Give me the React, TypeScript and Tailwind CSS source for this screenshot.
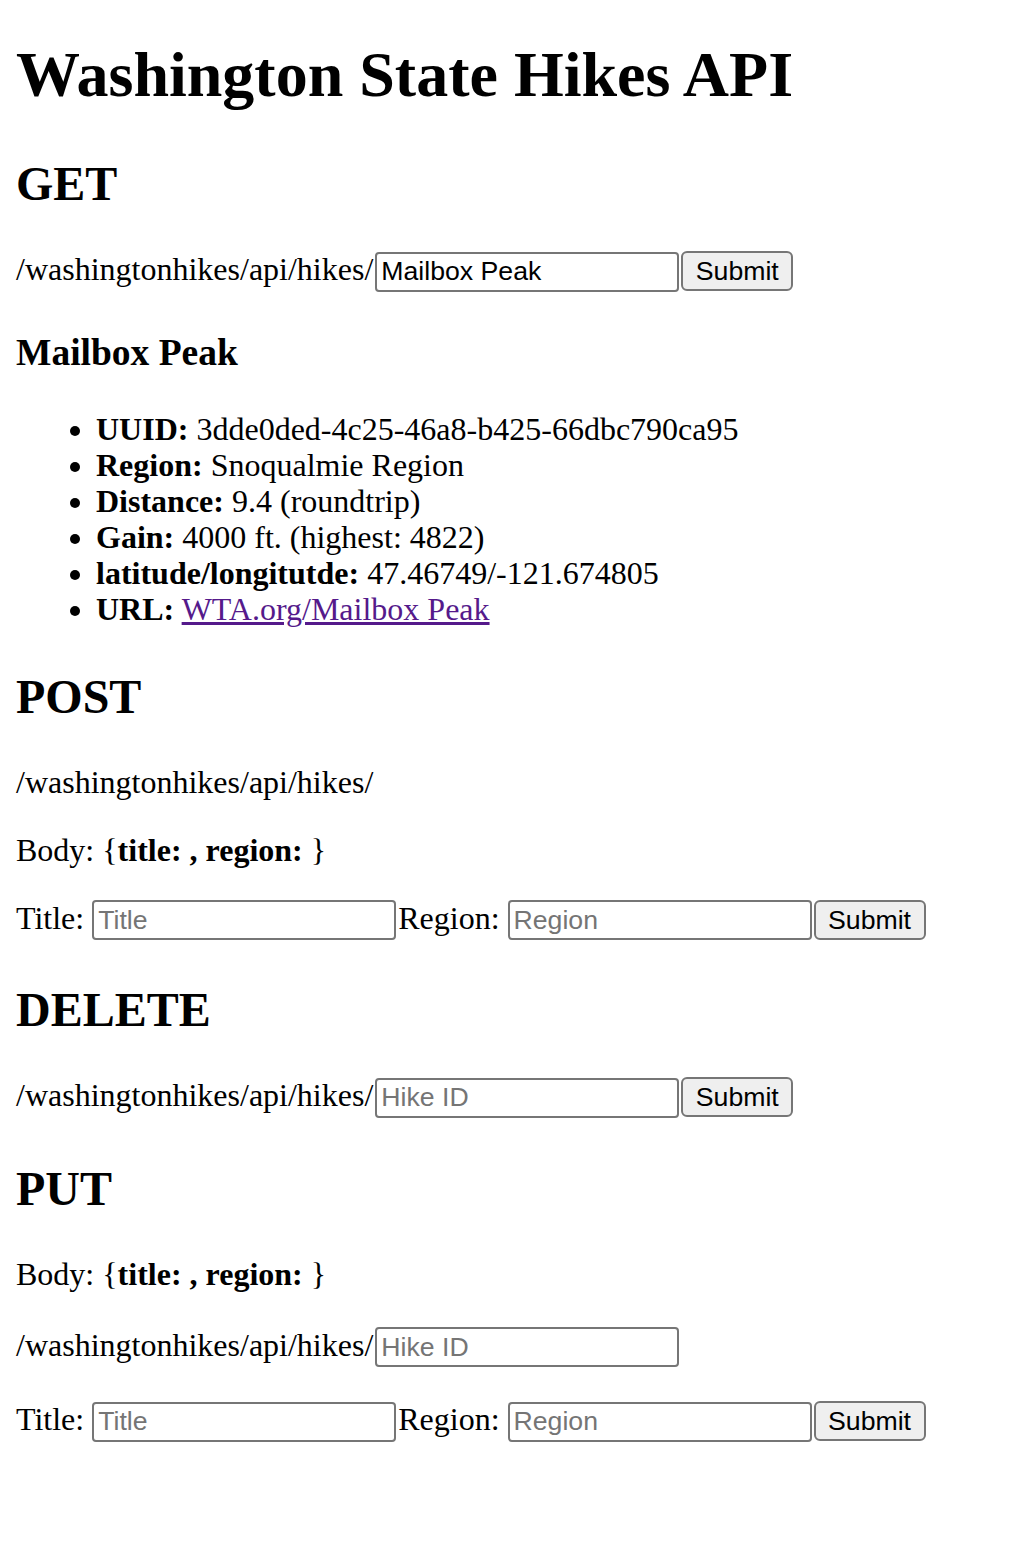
const serif = "font-['Liberation_Serif','Times_New_Roman',serif]";

function TextInput({ placeholder, value }: { placeholder?: string; value?: string }) {
  return (
    <input
      type="text"
      placeholder={placeholder}
      defaultValue={value}
      className="inline-block align-baseline w-[304px] h-[40px] px-[4px] bg-white border-2 border-[#767676] rounded-[4px] font-['Liberation_Sans',Arial,sans-serif] text-[26.67px] text-black placeholder:text-[#757575]"
    />
  );
}

function SubmitButton() {
  return (
    <button className="inline-block align-baseline ml-[2px] w-[112px] h-[40px] bg-[#efefef] border-2 border-[#767676] rounded-[6px] font-['Liberation_Sans',Arial,sans-serif] text-[26.67px] text-black">
      Submit
    </button>
  );
}

function PathRow({ mt, value, placeholder, button = true }: { mt: string; value?: string; placeholder?: string; button?: boolean }) {
  return (
    <p className={`${mt} leading-[36px] whitespace-nowrap`}>
      <span>/washingtonhikes/api/hikes/</span>
      <span className="ml-[2px]" />
      <TextInput value={value} placeholder={placeholder} />
      {button && <SubmitButton />}
    </p>
  );
}

function TitleRegionRow({ mt }: { mt: string }) {
  return (
    <p className={`${mt} leading-[36px] whitespace-nowrap`}>
      Title: <TextInput placeholder="Title" />
      <span className="ml-[2px]">Region: </span>
      <TextInput placeholder="Region" />
      <SubmitButton />
    </p>
  );
}

function BodyLine({ mt }: { mt: string }) {
  return (
    <p className={`${mt} leading-[36px]`}>
      Body: {"{"}
      <b>title: , region: </b>
      {"}"}
    </p>
  );
}

export default function App() {
  return (
    <div className={`${serif} bg-white text-black text-[32px] px-4 pt-[39px] pb-[80px] min-h-[1550px]`}>
      <h1 className="text-[64px] leading-[72px] font-bold">Washington State Hikes API</h1>

      {/* GET */}
      <h2 className="mt-[46px] text-[48px] leading-[54px] font-bold">GET</h2>
      <PathRow mt="mt-[40px]" value="Mailbox Peak" />

      <h3 className="mt-[40px] text-[37.5px] leading-[42px] font-bold">Mailbox Peak</h3>
      <ul className="mt-[37px] pl-[80px] list-disc leading-[36px]">
        <li>
          <b>UUID:</b> 3dde0ded-4c25-46a8-b425-66dbc790ca95
        </li>
        <li>
          <b>Region:</b> Snoqualmie Region
        </li>
        <li>
          <b>Distance:</b> 9.4 (roundtrip)
        </li>
        <li>
          <b>Gain:</b> 4000 ft. (highest: 4822)
        </li>
        <li>
          <b>latitude/longitutde:</b> 47.46749/-121.674805
        </li>
        <li>
          <b>URL:</b>{" "}
          <a href="#" className="text-[#551a8b] underline">
            WTA.org/Mailbox Peak
          </a>
        </li>
      </ul>

      {/* POST */}
      <h2 className="mt-[43px] text-[48px] leading-[54px] font-bold">POST</h2>
      <p className="mt-[40px] leading-[36px]">/washingtonhikes/api/hikes/</p>
      <BodyLine mt="mt-[32px]" />
      <TitleRegionRow mt="mt-[32px]" />

      {/* DELETE */}
      <h2 className="mt-[43px] text-[48px] leading-[54px] font-bold">DELETE</h2>
      <PathRow mt="mt-[40px]" placeholder="Hike ID" />

      {/* PUT */}
      <h2 className="mt-[44px] text-[48px] leading-[54px] font-bold">PUT</h2>
      <BodyLine mt="mt-[40px]" />
      <PathRow mt="mt-[35px]" placeholder="Hike ID" button={false} />
      <TitleRegionRow mt="mt-[34px]" />
    </div>
  );
}
